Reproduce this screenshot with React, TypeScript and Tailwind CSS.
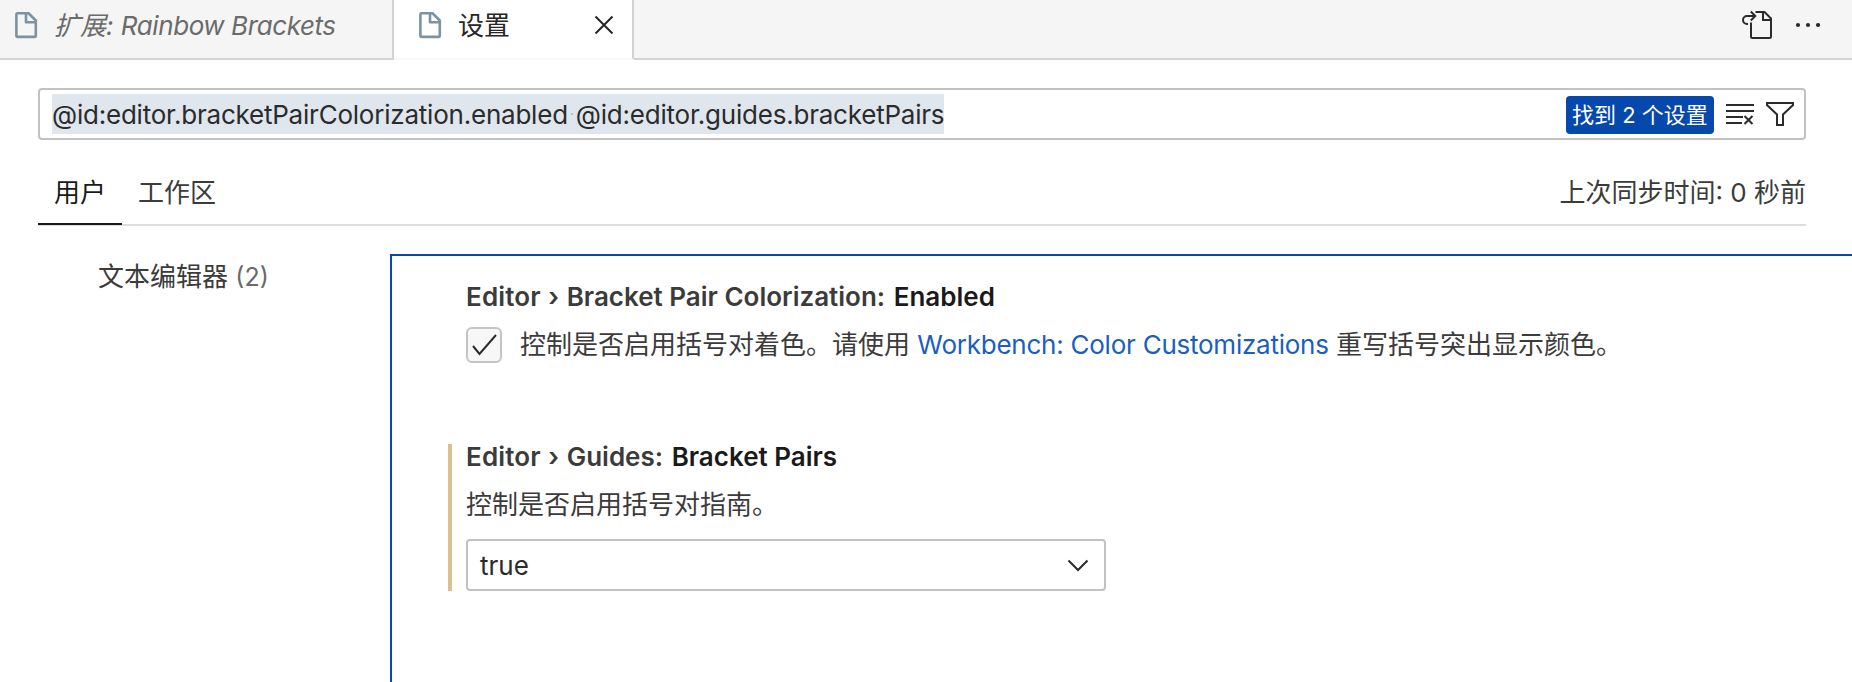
import React from "react";

function FileIcon() {
  return (
    <svg className="block h-[28px] w-[24px] shrink-0" viewBox="0 0 24 28" fill="none" stroke="#7b93a3" strokeWidth="2.6" strokeLinejoin="round">
      <path d="M3.500 2.300H14.500L21.800 9.500V24.500Q21.800 25.900 20.500 25.900H3.800Q2.400 25.900 2.400 24.500V3.700Q2.400 2.300 3.500 2.300Z" />
      <path d="M12 2.300V11.300H21.800" />
    </svg>
  );
}

function TabBar() {
  return (
    <header className="flex h-[60px] bg-[#f5f5f5]">
      <div className="flex w-[394px] shrink-0 items-start border-r-2 border-b-2 border-[#d3d3d3] pl-[14px]">
        <div className="pt-[11px]"><FileIcon /></div>
        <span className="ml-[16px] whitespace-nowrap pt-[8px] text-[26px] leading-[36px] italic text-[#6b6b6b]">
          扩展: <span className="tracking-[-0.42px]">Rainbow Brackets</span>
        </span>
      </div>
      <div className="flex w-[240px] shrink-0 items-start border-r-2 border-r-[#d3d3d3] border-b-2 border-b-[#f8f8f8] bg-white pl-[24px]">
        <div className="pt-[11px]"><FileIcon /></div>
        <span className="ml-[16px] whitespace-nowrap pt-[8px] text-[26px] leading-[36px] text-[#262626]">设置</span>
        <svg className="mr-[18px] mt-[15px] ml-auto h-[20px] w-[20px]" viewBox="0 0 20 20" fill="none" stroke="#262626" strokeWidth="2">
          <path d="M1.500 1.500L18.500 18.500M18.500 1.500L1.500 18.500" />
        </svg>
      </div>
      <div className="flex grow items-start justify-end border-b-2 border-[#d3d3d3] pr-[32px]">
        <svg className="mt-[9px] h-[32px] w-[32px]" viewBox="0 0 32 32" fill="none" stroke="#2b2b2b" strokeWidth="2">
          <path d="M15.500 3H24.500L31 9.500V27.500Q31 29 29.500 29H12.500Q11 29 11 27.500V13.500" strokeLinejoin="round" />
          <path d="M23 3V11H31" />
          <path d="M8 15H7A4 4 0 0 1 7 7H15M10.800 2.500L15.300 7L10.800 11.500" />
        </svg>
        <svg className="ml-[22px] mt-[21px] h-[8px] w-[26px]" viewBox="0 0 26 8" fill="#2b2b2b">
          <circle cx="4" cy="4" r="2.100" /><circle cx="14" cy="4" r="2.100" /><circle cx="24" cy="4" r="2.100" />
        </svg>
      </div>
    </header>
  );
}

function SearchBox() {
  return (
    <div className="mt-[28px] mr-[46px] ml-[38px] flex h-[52px] items-start rounded-[4px] border-2 border-[#c2c2c2]">
      <div className="mt-[4px] ml-[12px] flex h-[40px] w-[892px] whitespace-nowrap bg-[#dfe6ee] leading-[41px] tracking-[-0.22px] text-[#2b2b2b]">
        <span className="shrink-0">@id:editor.bracketPairColorization.enabled</span>
        <span className="w-[8px] shrink-0 text-center text-[16px] text-[#b4bcc4]">·</span>
        <span className="shrink-0">@id:editor.guides.bracketPairs</span>
      </div>
      <div className="mt-[6px] ml-auto h-[38px] w-[148px] rounded-[4px] bg-[#0648ab] pl-[6px] text-[22px] leading-[38px] whitespace-nowrap text-white">找到 2 个设置</div>
      <svg className="mt-[12px] ml-[12px] h-[26px] w-[28px]" viewBox="0 0 28 26" fill="none" stroke="#2b2b2b" strokeWidth="2">
        <path d="M0 3H28M0 9H28M0 15H17M0 21H16M18.500 14L26.500 22M26.500 14L18.500 22" />
      </svg>
      <svg className="mt-[12px] mr-[10px] ml-[12px] h-[26px] w-[28px]" viewBox="0 0 28 26" fill="none" stroke="#2b2b2b" strokeWidth="2">
        <path d="M1 1H27V3L17 12.500V23H11V12.500L1 3Z" />
      </svg>
    </div>
  );
}

function ScopeTabs() {
  return (
    <div className="mr-[46px] ml-[38px] flex h-[86px] border-b-2 border-[#dedede] leading-[36px]">
      <div className="mb-[-1px] h-[85px] w-[84px] border-b-2 border-[#1a1a1a] pt-[35px] pl-[16px] text-[#1a1a1a]">用户</div>
      <div className="pt-[35px] pl-[16px]">工作区</div>
      <div className="ml-auto pt-[35px] whitespace-nowrap">上次同步时间: 0 秒前</div>
    </div>
  );
}

function SettingTitle({ category, label }: { category: string; label: string }) {
  return (
    <h2 className="leading-[36px] font-semibold whitespace-nowrap">
      <span className="tracking-[0.15px]">Editor</span> <span className="mx-[1px]">›</span> {category}: <span className="ml-[2px] text-[#1a1a1a]">{label}</span>
    </h2>
  );
}

export default function App() {
  return (
    <div className="flex h-[682px] w-[1852px] flex-col overflow-hidden bg-white font-['Inter','Noto_Sans_CJK_SC',sans-serif] text-[26px] text-[#3b3b3b]">
      <TabBar />
      <SearchBox />
      <ScopeTabs />
      <main className="mt-[28px] flex grow">
        <nav className="w-[390px] shrink-0 pt-[5px] pl-[98px] leading-[36px] whitespace-nowrap">
          文本编辑器 <span className="text-[25px] text-[#6a6a6a]">(2)</span>
        </nav>
        <section className="grow border-t-2 border-l-2 border-[#0648ab] pl-[56px]">
          <div className="pt-[23px] pl-[18px]">
            <SettingTitle category="Bracket Pair Colorization" label="Enabled" />
            <div className="mt-[12px] flex">
              <div className="h-[36px] w-[36px] rounded-[6px] border-2 border-[#c4c4c4] bg-[#f7f7f7]">
                <svg className="h-[32px] w-[32px]" viewBox="0 0 32 32" fill="none" stroke="#2b2b2b" strokeWidth="2">
                  <path d="M5 17L11.500 25L28 6" />
                </svg>
              </div>
              <p className="ml-[18px] leading-[36px] whitespace-nowrap">控制是否启用括号对着色。请使用 <a className="tracking-[-0.24px] text-[#1a5fbf]">Workbench: Color Customizations</a> 重写括号突出显示颜色。</p>
            </div>
          </div>
          <div className="mt-[81px] flex h-[147px] w-[680px] flex-col border-l-4 border-[#dcc090] pl-[14px]">
            <div className="-mt-[5px]"><SettingTitle category="Guides" label="Bracket Pairs" /></div>
            <p className="mt-[12px] leading-[36px] whitespace-nowrap">控制是否启用括号对指南。</p>
            <div className="mt-[16px] flex h-[52px] w-[640px] shrink-0 items-start rounded-[4px] border-2 border-[#c2c2c2] pl-[12px] text-[#2b2b2b]">
              <span className="leading-[50px]">true</span>
              <svg className="mt-[18px] mr-[15px] ml-auto h-[14px] w-[22px]" viewBox="0 0 22 14" fill="none" stroke="#2b2b2b" strokeWidth="2">
                <path d="M1.500 1.500L11 11L20.500 1.500" />
              </svg>
            </div>
          </div>
        </section>
      </main>
    </div>
  );
}
